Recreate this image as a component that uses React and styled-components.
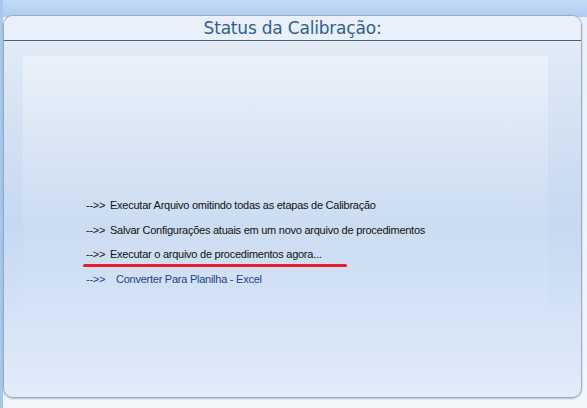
import React from 'react';
import styled, { createGlobalStyle } from 'styled-components';

const GlobalStyle = createGlobalStyle`
    html, body {
        margin: 0;
        padding: 0;
        background: #f4f7fb;
    }
`;

const Page = styled.div`
    width: 587px;
    height: 408px;
    box-sizing: border-box;
    padding: 15px 5px 10px 3px;
    display: flex;
    background:
        linear-gradient(to right, #a9c7ee 0, #a9c7ee 3px, transparent 3px),
        linear-gradient(to bottom, #c3dbf6 0, #aecbf0 17px, #eaf1fa 17px, #f3f6fa 100%);
`;

const Panel = styled.div`
    flex: 1;
    display: flex;
    flex-direction: column;
    border: 1px solid #9aabc2;
    border-radius: 10px;
    overflow: hidden;
    box-shadow: 0 1px 2px rgba(60, 80, 110, 0.35);
    background: linear-gradient(to bottom, #e6eef8 0%, #d3e1f3 30%, #c6d9f0 55%, #d4e3f6 78%, #e2ecfb 100%);
`;

const Header = styled.div`
    height: 24px;
    border-bottom: 1px solid #44607c;
    background: #eaf0f9;
    display: flex;
    align-items: center;
    justify-content: center;
    font-family: Tahoma, "DejaVu Sans", sans-serif;
    font-size: 17px;
    color: #2d5f96;
    letter-spacing: -0.2px;
`;

const Body = styled.div`
    flex: 1;
    display: flex;
    padding: 15px 33px 40px 19px;
`;

const Inner = styled.div`
    flex: 1;
    padding: 142px 0 0 63px;
    background: linear-gradient(to bottom, rgba(255, 255, 255, 0.35) 0%, rgba(255, 255, 255, 0.12) 45%, rgba(255, 255, 255, 0) 100%);
`;

const List = styled.ul`
    list-style: none;
    margin: 0;
    padding: 0;
    display: flex;
    flex-direction: column;
    gap: 10.5px;
`;

const Item = styled.li`
    position: relative;
    font-family: "Liberation Sans", Arial, sans-serif;
    font-size: 11px;
    line-height: 14px;
    letter-spacing: -0.25px;
    color: ${p => (p.link ? '#1d3f8c' : '#111')};
    white-space: nowrap;

    ${p => p.marked && `
        &::after {
            content: '';
            position: absolute;
            left: -3px;
            top: 17px;
            width: 264px;
            height: 3px;
            border-radius: 2px;
            background: #e41e2b;
        }
    `}
`;

const Arrow = styled.span`
    display: inline-block;
    width: ${p => (p.link ? '30px' : '24px')};
`;

const items = [
    { text: 'Executar Arquivo omitindo todas as etapas de Calibração' },
    { text: 'Salvar Configurações atuais em um novo arquivo de procedimentos' },
    { text: 'Executar o arquivo de procedimentos agora...', marked: true },
    { text: 'Converter Para Planilha - Excel', link: true },
];

const App = () => (
    <>
        <GlobalStyle />
        <Page>
            <Panel>
                <Header>Status da Calibração:</Header>
                <Body>
                    <Inner>
                        <List>
                            { items.map(item => (
                                <Item key={ item.text } link={ item.link } marked={ item.marked }>
                                    <Arrow link={ item.link }>-->></Arrow>
                                    { item.text }
                                </Item>
                            )) }
                        </List>
                    </Inner>
                </Body>
            </Panel>
        </Page>
    </>
);

export default App;
